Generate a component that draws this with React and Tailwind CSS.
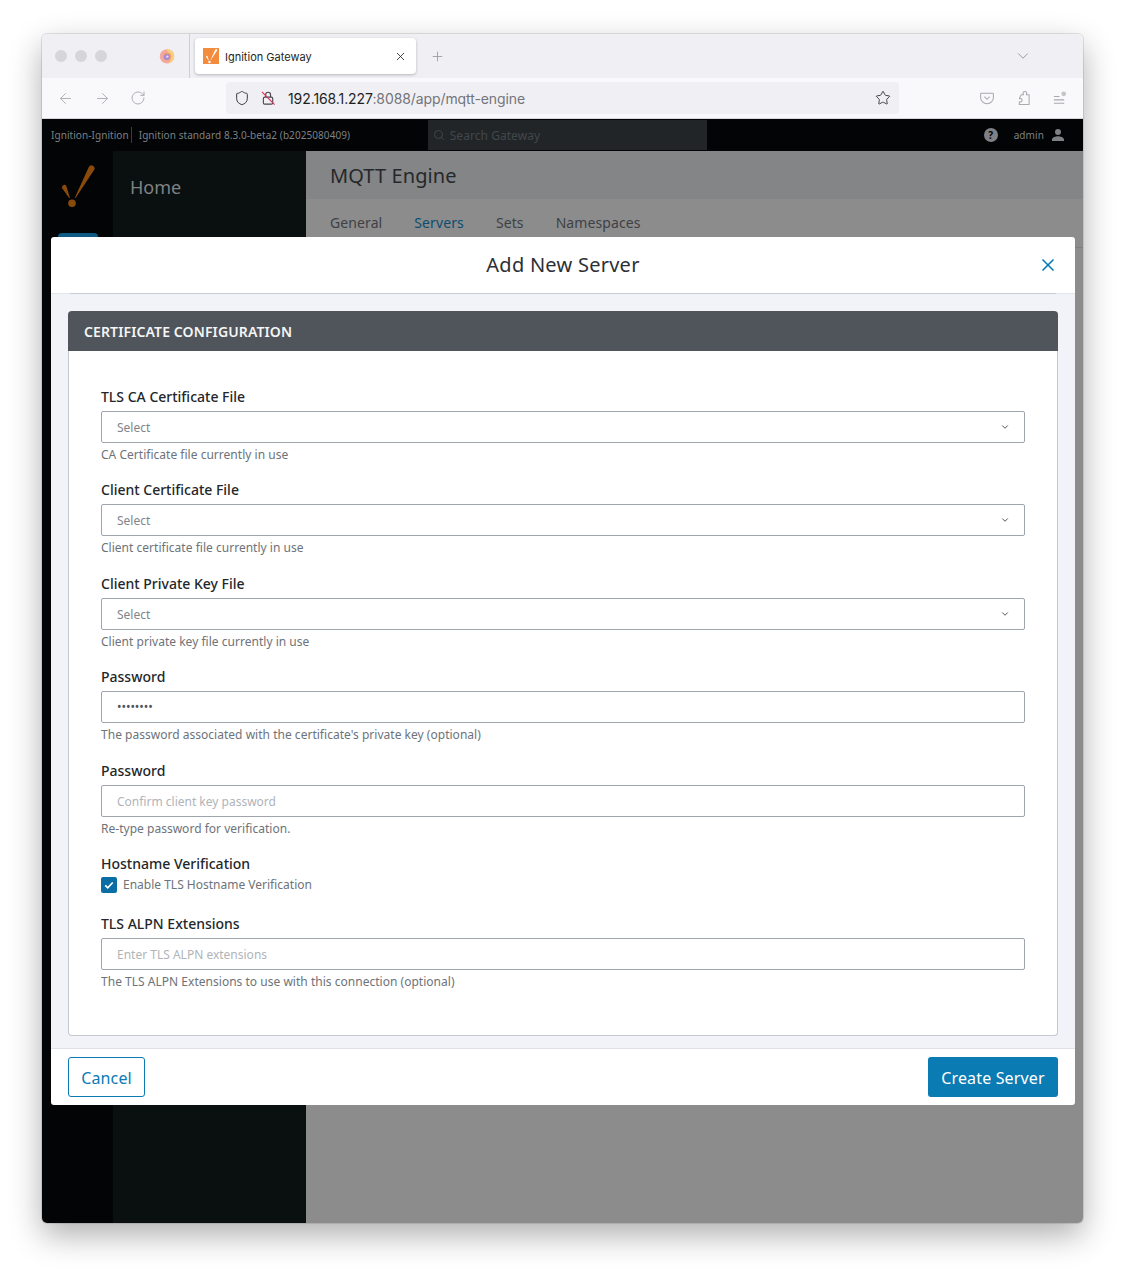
import { ArrowLeft, ArrowRight, ChevronDown, Plus, RotateCw, Search, Shield, Star, X } from "lucide-react";

function Logo({ className, color }) {
  return (
    <svg viewBox="0 0 36 44" className={className} fill={color}>
      <path d="M28.8 2 a3.1 3.1 0 0 1 5.6 2.6 L15.6 33 L14.8 32.7 Z" />
      <path d="M2.2 23.2 a2.3 2.3 0 0 1 4.2 -1.9 L9.9 32.7 L9.1 33 Z" />
      <circle cx="12" cy="38.2" r="3.8" />
    </svg>
  );
}

function FirefoxIcon() {
  return (
    <svg viewBox="0 0 16 16" className="w-[16px] h-[16px]">
      <circle cx="8" cy="8.4" r="7.2" fill="#f4a9a0" />
      <path d="M7 1 C12 1 15.8 4.5 15.2 9 C14.8 12.5 12 15 9 15.4 C12 13 12.5 8 10 5.5 C9 4 8 2.5 7 1Z" fill="#f7cf7e" />
      <circle cx="8.2" cy="8.6" r="4.2" fill="#f0a15f" />
      <circle cx="7.8" cy="9" r="3" fill="#a98ad6" />
      <circle cx="8.3" cy="8.6" r="1.2" fill="#e6d3ee" />
    </svg>
  );
}

function Field({ label, help, placeholder, value, select }) {
  return (
    <div className="h-[93.5px]">
      <label className="block h-[26px] leading-[24px] text-[14px] font-medium text-[#23272b]">{label}</label>
      <div className="h-[32px] border border-[#9fa5ad] rounded-[2px] bg-white flex items-center justify-between pl-[15px] pr-[14px]">
        {value ? (
          <span className="text-[12px] tracking-[-0.05px] text-[#50555b]">{value}</span>
        ) : (
          <span className={select ? "pt-[2px] text-[12px] text-[#7f858c]" : "pt-[2px] text-[12px] text-[#b0b4b9]"}>{placeholder}</span>
        )}
        {select && <ChevronDown size={10} strokeWidth={2.4} className="text-[#50555b]" />}
      </div>
      <p className="h-[24px] leading-[24px] text-[12px] tracking-[0.02px] text-[#6d7379]">{help}</p>
    </div>
  );
}

export default function App() {
  return (
    <div className="min-h-[1273px] bg-white pt-[34px] pl-[42px] font-['Noto_Sans',sans-serif]">
      <div className="relative w-[1041px] h-[1189px] rounded-[5px] overflow-hidden shadow-[0_0_0_1px_rgba(0,0,0,0.1),0_12px_32px_rgba(0,0,0,0.32)] flex flex-col">
        {/* tab strip */}
        <div className="h-[44px] bg-[#f0f0f4] flex items-center font-['Inter',sans-serif]">
          <div className="flex gap-[8px] pl-[13px]">
            <span className="w-[12px] h-[12px] rounded-full bg-[#d6d6d8]" />
            <span className="w-[12px] h-[12px] rounded-full bg-[#d6d6d8]" />
            <span className="w-[12px] h-[12px] rounded-full bg-[#d6d6d8]" />
          </div>
          <div className="ml-[52px]">
            <FirefoxIcon />
          </div>
          <div className="ml-[14px] w-px h-[44px] bg-[#cfcfd3]" />
          <div className="ml-[5px] w-[221px] h-[36px] bg-white rounded-[4px] shadow-[0_1px_3px_rgba(0,0,0,0.25)] flex items-center pl-[8px] pr-[9px]">
            <div className="w-[16px] h-[16px] bg-[#f58b3c] flex items-center justify-center">
              <Logo className="w-[13px] h-[15px]" color="#ffffff" />
            </div>
            <span className="ml-[6px] pt-[2px] text-[11px] text-[#1f1f23] flex-1">Ignition Gateway</span>
            <X size={13} strokeWidth={1.6} className="text-[#2b2b30]" />
          </div>
          <Plus size={15} strokeWidth={1.4} className="ml-[14px] text-[#9a9aa0]" />
          <ChevronDown size={18} strokeWidth={1.2} className="ml-auto mr-[51px] text-[#8f8f95]" />
        </div>

        {/* toolbar */}
        <div className="h-[41px] bg-[#f9f9fb] flex items-center border-b border-[#d8d8dc]">
          <div className="flex items-center gap-[19.5px] pl-[15px] text-[#a9a9ae]">
            <ArrowLeft size={17} strokeWidth={1.3} />
            <ArrowRight size={17} strokeWidth={1.3} />
            <RotateCw size={16} strokeWidth={1.4} />
          </div>
          <div className="ml-[80px] w-[673px] h-[32px] rounded-[4px] bg-[#f0f0f4] flex items-center pl-[8px] pr-[8px]">
            <Shield size={16} strokeWidth={1.5} className="text-[#3a3a40]" />
            <svg viewBox="0 0 16 16" className="ml-[11px] w-[15px] h-[16px]">
              <rect x="2.5" y="7" width="10" height="7.5" rx="1.5" fill="none" stroke="#45454b" strokeWidth="1.2" />
              <path d="M5 7 V4.5 a2.6 2.6 0 0 1 5.2 0 V7" fill="none" stroke="#45454b" strokeWidth="1.2" />
              <path d="M1 1.5 L14.5 15" stroke="#e0335e" strokeWidth="1.3" />
            </svg>
            <span className="ml-[12px] text-[14px] tracking-[-0.09px] font-['Inter',sans-serif] text-[#1f1f23]">
              192.168.1.227<span className="text-[#74747a]">:8088/app/mqtt-engine</span>
            </span>
            <Star size={16} strokeWidth={1.4} className="ml-auto text-[#3a3a40]" />
          </div>
          <div className="ml-[81px] flex items-center gap-[22px] text-[#a9a9ae]">
            <svg viewBox="0 0 16 16" className="w-[14px] h-[14px]">
              <path d="M1.5 2.5 h13 a0.8 0.8 0 0 1 .8 .8 V7.5 a7.3 7 0 0 1 -14.6 0 V3.3 a0.8 0.8 0 0 1 .8 -.8Z" fill="none" stroke="currentColor" strokeWidth="1.2" />
              <path d="M5 6.5 L8 9.5 L11 6.5" fill="none" stroke="currentColor" strokeWidth="1.2" />
            </svg>
            <svg viewBox="0 0 16 16" className="w-[15px] h-[16px]" fill="none" stroke="currentColor" strokeWidth="1.1" strokeLinejoin="round">
              <path d="M5.5 4.5 H8 C7 3 7.6 1 9.5 1 C11.4 1 12 3 11 4.5 H14 V15 H3.5 V12 C5 12.6 6.5 12 6.5 10.4 C6.5 8.8 5 8.2 3.5 8.8 Z" />
            </svg>
            <svg viewBox="0 0 16 16" className="-ml-[1px] w-[15px] h-[16px]">
              <path d="M2 6.5 h6 M2 10 h11 M2 13.5 h11" stroke="currentColor" strokeWidth="1.1" />
              <circle cx="12.5" cy="3.5" r="2.5" fill="#c4c4c8" />
            </svg>
          </div>
        </div>

        {/* gateway top bar */}
        <div className="h-[32px] bg-[#020405] flex items-center text-[#7e8184]">
          <span className="pl-[9px] text-[10px] tracking-[0.06px]">Ignition-Ignition</span>
          <span className="ml-[2px] w-px h-[16px] bg-[#3a3d40]" />
          <span className="ml-[7px] w-[289px] text-[10px] tracking-[0.07px]">Ignition standard 8.3.0-beta2 (b2025080409)</span>
          <div className="w-[279px] h-[30px] bg-[#212528] flex items-center pl-[5px] text-[#42474a]">
            <Search size={12} strokeWidth={2} />
            <span className="ml-[5px] pt-[2px] text-[12px] tracking-[0.05px]">Search Gateway</span>
          </div>
          <div className="ml-auto flex items-center pr-[17px]">
            <span className="w-[14px] h-[14px] rounded-full bg-[#7e8184] text-[#020405] text-[10px] font-bold flex items-center justify-center">?</span>
            <span className="ml-[16px] text-[10px] tracking-[0.1px]">admin</span>
            <svg viewBox="0 0 24 24" className="ml-[6px] w-[16px] h-[16px]" fill="currentColor">
              <path d="M12 12a4.5 4.5 0 1 0 0-9 4.5 4.5 0 0 0 0 9Zm0 2c-3.4 0-9 1.7-9 5v2h18v-2c0-3.3-5.6-5-9-5Z" />
            </svg>
          </div>
        </div>

        {/* page behind the dialog */}
        <div className="flex-1 flex">
          <div className="w-[71px] bg-[#020405] flex flex-col items-center">
            <Logo className="w-[36px] h-[44px] mt-[14px] ml-[1px]" color="#8a4a0c" />
            <div className="mt-[24px] w-[40px] h-[40px] rounded-t-[4px] bg-[#0e5a85]" />
          </div>
          <div className="w-[193px] bg-[#0a0f10] pl-[17px] pt-[23px] text-[18px] leading-[26px] text-[#7f8384]">Home</div>
          <div className="flex-1 bg-[#8c8c8c]">
            <div className="h-[48px] bg-[#848586] pl-[24px] pt-[9px] text-[20px] tracking-[0.1px] leading-[32px] text-[#25282b]">MQTT Engine</div>
            <div className="h-[49px] border-b border-[#7d7e7f] flex gap-[32px] pl-[24px] pt-[13px] text-[14px] tracking-[0.1px] leading-[22px] text-[#3d4145]">
              <span>General</span>
              <span className="text-[#0b4c70]">Servers</span>
              <span>Sets</span>
              <span>Namespaces</span>
            </div>
          </div>
        </div>

        {/* dialog */}
        <div className="absolute left-[9px] top-[203px] w-[1024px] h-[868px] bg-white rounded-[3px] flex flex-col overflow-hidden">
          <div className="h-[57px] shrink-0 relative flex items-center justify-center border-b border-[#e3e6ea]">
            <h2 className="text-[20px] text-[#2c3035] tracking-[0.25px]">Add New Server</h2>
            <X size={20} strokeWidth={2} className="absolute right-[17px] top-[18px] text-[#0a7bb3]" />
          </div>
          <div className="flex-1 bg-[#f1f3f8] px-[17px]">
            <div className="h-px mx-[2px] bg-[#c9cdd2] -mt-px relative" />
            <div className="mt-[17px] h-[725px] bg-white rounded-[4px] border border-[#c3c9cf] border-t-0">
              <div className="-mx-px h-[40px] rounded-t-[4px] bg-[#50555b] flex items-center pl-[16px] text-[14px] tracking-[0.12px] font-semibold text-[#f4f5f6]">
                CERTIFICATE CONFIGURATION
              </div>
              <div className="pt-[33.9px] px-[32px]">
                <Field label="TLS CA Certificate File" help="CA Certificate file currently in use" placeholder="Select" select />
                <Field label="Client Certificate File" help="Client certificate file currently in use" placeholder="Select" select />
                <Field label="Client Private Key File" help="Client private key file currently in use" placeholder="Select" select />
                <Field label="Password" help="The password associated with the certificate's private key (optional)" value="••••••••" />
                <Field label="Password" help="Re-type password for verification." placeholder="Confirm client key password" />
                <div className="h-[59.5px]">
                  <label className="block h-[24px] leading-[24px] text-[14px] font-medium text-[#23272b]">Hostname Verification</label>
                  <div className="flex items-center">
                    <span className="w-[16px] h-[16px] rounded-[2px] bg-[#0a6ea5] flex items-center justify-center">
                      <svg viewBox="0 0 12 12" className="w-[10px] h-[10px]">
                        <path d="M1.5 6.5 L4.5 9.5 L10.5 3" fill="none" stroke="#ffffff" strokeWidth="2" />
                      </svg>
                    </span>
                    <span className="ml-[6px] text-[12px] text-[#6d7379]">Enable TLS Hostname Verification</span>
                  </div>
                </div>
                <Field label="TLS ALPN Extensions" help="The TLS ALPN Extensions to use with this connection (optional)" placeholder="Enter TLS ALPN extensions" />
              </div>
            </div>
          </div>
          <div className="h-[57px] shrink-0 border-t border-[#dfe2e6] flex items-center justify-between px-[17px]">
            <button className="w-[77px] h-[40px] pt-[2px] rounded-[3px] border border-[#0a7bb3] text-[16px] tracking-[0.15px] text-[#0a7bb3]">Cancel</button>
            <button className="w-[130px] h-[40px] pt-[2px] rounded-[3px] bg-[#0a7bb3] text-[16px] tracking-[0.15px] text-white">Create Server</button>
          </div>
        </div>
      </div>
    </div>
  );
}
